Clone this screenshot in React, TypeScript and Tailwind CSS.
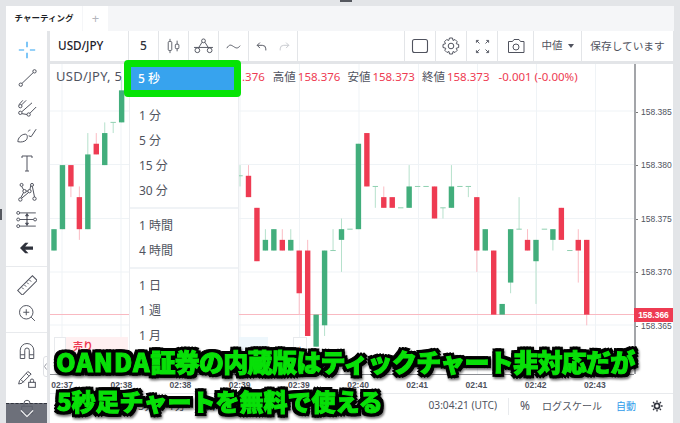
import React from "react";

const JP = '"Noto Sans","Noto Sans CJK JP",sans-serif';
const ARIAL = '"Liberation Sans",sans-serif';

// [index, open, close, high, low] in thousandths above 158.300
type C = [number, number, number, number, number];
const candles: C[] = [
  [0, 72, 74, 74, 72], [1, 74, 80, 80, 74], [2, 80, 78, 80, 77], [3, 77, 74, 78, 73],
  [4, 74, 81, 83, 74], [5, 82, 81, 83, 81], [6, 80, 83, 84, 80], [7, 84, 84, 84, 83],
  [8, 84, 87, 88, 84],
  [22, 79, 79, 80, 78], [23, 79, 77, 80, 77], [24, 76, 71, 76, 71], [25, 72, 73, 74, 72],
  [26, 72, 74, 74, 72], [27, 73, 72, 74, 72], [28, 72, 73, 74, 72], [29, 72, 68, 72, 66],
  [30, 72, 64, 73, 64], [31, 63, 66, 66, 63], [32, 65, 72, 72, 64], [33, 72, 72, 74, 72],
  [34, 73, 74, 75, 70], [35, 74, 74, 74, 74], [36, 74, 82, 82, 74], [37, 83, 78, 83, 78],
  [38, 78, 78, 78, 76], [39, 77, 76, 78, 76], [40, 77, 76, 77, 76], [41, 76, 76, 76, 76],
  [42, 76, 78, 80, 76], [43, 78, 78, 78, 78], [44, 78, 78, 78, 78], [45, 78, 75, 78, 75],
  [46, 76, 76, 76, 75], [47, 76, 78, 80, 76], [48, 78, 78, 78, 78], [49, 78, 78, 78, 77],
  [50, 77, 72, 77, 70], [51, 72, 74, 74, 72], [52, 72, 66, 72, 66], [53, 66, 67, 67, 66],
  [54, 69, 74, 74, 68], [55, 74, 74, 77, 74], [56, 73, 72, 74, 72], [57, 71, 73, 73, 67],
  [58, 74, 74, 74, 74], [59, 73, 74, 74, 72], [60, 76, 73, 76, 73], [61, 72, 72, 72, 72],
  [62, 73, 72, 74, 69], [63, 73, 66, 73, 65],
];
const py = (p: number) => 218.5 - (p - 75) * 10.68;
const cx = (i: number) => 54 + 8.456 * i;

function Chart() {
  const gx = [62, 121, 180, 240, 299.5, 359, 418.5, 477.5, 536.5, 595.5];
  const gy = [111, 164.5, 218.5, 272, 325];
  return (
    <svg viewBox="50 64 584 310" width={584} height={310} className="block">
      {gx.map((x) => <line key={x} x1={x} x2={x} y1={64} y2={374} stroke="#eff3f6" />)}
      {gy.map((y) => <line key={y} x1={50} x2={634} y1={y} y2={y} stroke="#eff3f6" />)}
      <line x1={50} x2={634} y1={314.5} y2={314.5} stroke="#f9b9c1" />
      {candles.map(([i, o, c, h, l]) => {
        const up = c >= o;
        const x = cx(i);
        const top = py(Math.max(o, c));
        const bot = py(Math.min(o, c));
        return (
          <g key={i}>
            <line x1={x} x2={x} y1={py(h)} y2={py(l)} stroke={up ? "#b6e1cc" : "#fbbcc4"} strokeWidth={1} />
            {o === c ? (
              <line x1={x - 2.7} x2={x + 2.7} y1={top} y2={top} stroke="#8fd0b0" strokeWidth={1} />
            ) : (
              <rect x={x - 2.7} y={top} width={5.4} height={bot - top} fill={up ? "#42ae7c" : "#ee3b52"} />
            )}
          </g>
        );
      })}
    </svg>
  );
}

const S = ({ children, w = 24, h = 24, vb, sw = 1 }: { children: React.ReactNode; w?: number; h?: number; vb?: string; sw?: number }) => (
  <svg width={w} height={h} viewBox={vb ?? `0 0 ${w} ${h}`} fill="none" stroke="#50535e" strokeWidth={sw} className="block">
    {children}
  </svg>
);

const L = ({ children }: { children: React.ReactNode }) => (
  <S w={20} h={20} vb="0 0 24 24" sw={1.2}>{children}</S>
);

const leftIcons: React.ReactNode[] = [
  <svg width="18" height="18" viewBox="0 0 22 22" stroke="#2ea3f2" strokeWidth="1.5" fill="none" className="block"><path d="M11 1v6.500M11 14.500v6.500M1 11h6.500M14.500 11H21" /></svg>,
  <L><circle cx="4.500" cy="20" r="2" /><circle cx="21" cy="4" r="2" /><path d="M6 18.500 19.500 5.500" /></L>,
  <L><circle cx="4" cy="19" r="2" /><circle cx="14" cy="21" r="2" /><circle cx="4" cy="11" r="2" /><path d="M5.500 9.500 11 4M6 17.500 18 7M6 20l6 1M15.500 19.500 23 12M2.500 9 7 4" /></L>,
  <L><path d="M1 20c0-4 4-9 9-9 3 0 3 5 1 7-2 2-6 3-10 2Z" /><path d="M14 13l3 1 6-9" /><path d="M13 8c1-1 2-2 3-2" /></L>,
  <S w={12} h={17} vb="0 0 12 17"><path d="M1 3V1h10v2M6 1v15M4 16h4" /></S>,
  <L><circle cx="4" cy="21" r="2" /><circle cx="5.500" cy="3.500" r="1.800" /><circle cx="18" cy="3.500" r="1.800" /><circle cx="21" cy="20" r="2" /><circle cx="9" cy="11" r="2" /><circle cx="15" cy="11" r="2" /><path d="M4.500 19 8 12.500M5.700 5.500 8 9.500M16.500 4.500 15.500 9M18.500 5.500 21 18M11 11h2M5.500 19.500 14 12.500" /></L>,
  <svg width="22" height="19" viewBox="0 0 30 24" fill="none" stroke="#50535e" strokeWidth="1.300" className="block"><circle cx="3" cy="3" r="2" /><circle cx="3" cy="12" r="2" /><circle cx="3" cy="21" r="2" /><circle cx="26" cy="12" r="2" /><path d="M5 3h22M5 21h22M5 12h19" /><path d="M15 4v16" stroke="#30333d" /><path d="M13 7l2-3 2 3ZM13 17l2 3 2-3Z" fill="#30333d" /></svg>,
];

function Tool({ children, className = "" }: { children: React.ReactNode; className?: string }) {
  return <div className={`h-[28px] flex items-center justify-center ${className}`}>{children}</div>;
}

function Seg({ w, children, className = "" }: { w: string; children?: React.ReactNode; className?: string }) {
  return <div className={`${w} h-full bg-white flex items-center justify-center shrink-0 ${className}`}>{children}</div>;
}

export default function App() {
  const items1 = ["1 分", "5 分", "15 分", "30 分"];
  const items2 = ["1 時間", "4 時間"];
  const items3 = ["1 日", "1 週", "1 月"];
  const times = ["02:37", "02:38", "02:38", "02:39", "02:39", "02:40", "02:41", "02:41", "02:42", "02:43"];
  const prices = ["158.385", "158.380", "158.375", "158.370", "158.365"];
  const Item = ({ t }: { t: string }) => (
    <div className="h-[25px] flex items-center pl-[9px] text-[12px] text-[#50535e]">{t}</div>
  );
  return (
    <div className="relative w-[680px] h-[423px] overflow-hidden bg-[#e3e5e8] pt-[6px] pl-[6px] flex flex-col" style={{ fontFamily: JP }}>
      {/* tabs */}
      <div className="h-[25px] mr-[6px] bg-[#f5f6f8] flex shrink-0">
        <div className="w-[76px] bg-white flex items-center justify-center text-[8.500px] font-bold text-[#1d1f26]">チャーティング</div>
        <div className="w-[25px] ml-[1px] bg-white flex items-center justify-center text-[13px] text-[#b4b6bd]">+</div>
      </div>

      <div className="flex flex-1 min-h-0">
        {/* left toolbar */}
        <div className="w-[41px] bg-white flex flex-col items-center shrink-0 relative">
          <div className="flex flex-col pt-[5px] h-[235px]">
            {leftIcons.map((ic, i) => (
              <Tool key={i} className="!h-[28.300px]">{ic}</Tool>
            ))}
            <Tool className="!h-[28.300px]">
              <svg width="13" height="12" viewBox="0 0 20 16" fill="#2f323c" className="block"><path d="M0 8 8 0h5L8 5.500h12v5H8l5 5.500H8Z" /></svg>
            </Tool>
          </div>
          <div className="w-full h-[1px] bg-[#e8eaed]" />
          <div className="flex flex-col pt-[4px] h-[65px]">
            <Tool>
              <S w={20} h={20} vb="0 0 24 24" sw={1.2}><rect x="0" y="8.500" width="25" height="8" transform="rotate(-45 12.500 12.500)" /><path d="M6 15l2 2M9 12l2 2M12 9l2 2M15 6l2 2" /></S>
            </Tool>
            <Tool>
              <S w={18} h={18} vb="0 0 24 24" sw={1.300}><circle cx="11" cy="11" r="9" /><path d="M7 11h8M11 7v8M17.500 17.500l5 5" /></S>
            </Tool>
          </div>
          <div className="w-full h-[1px] bg-[#e8eaed]" />
          <div className="flex flex-col pt-[4px]">
            <Tool>
              <S w={18} h={18} vb="0 0 24 24" sw={1.300}><path d="M3 22V11a9 9 0 0 1 18 0v11h-6V11a3 3 0 0 0-6 0v11ZM3 17h6M15 17h6" /></S>
            </Tool>
            <Tool>
              <S w={20} h={20} vb="0 0 24 24" sw={1.2}><path d="M2 18 3 14 13 3l4 3L6 17ZM5 13l3 3M11 5l3 3" /><rect x="14" y="16" width="8" height="6" /><path d="M16 16v-2a2 2 0 0 1 4 0v2" /></S>
            </Tool>
            <Tool>
              <S w={18} h={18} vb="0 0 24 24" sw={1.300}><rect x="5" y="11" width="14" height="10" /><path d="M8 11V7a4 4 0 0 1 8 0" /></S>
            </Tool>
          </div>
        </div>

        {/* right column */}
        <div className="ml-[3px] flex flex-col w-[623px] min-h-0">
          <div className="h-[30px] flex gap-[1px] shrink-0">
            <Seg w="w-[78px]" className="!justify-start pl-[8px] text-[11.700px] font-medium text-[#1f222b]">USD/JPY</Seg>
            <Seg w="w-[29px]" className="text-[12px] font-medium text-[#30333d]">5</Seg>
            <Seg w="w-[29px]">
              <S w={16} h={16} vb="0 0 18 18"><rect x="2.500" y="4" width="4" height="10" rx="1" /><path d="M4.500 1v3M4.500 14v3M12.500 3v4M12.500 12v3" /><rect x="10.500" y="7" width="4" height="5" rx="1" /></S>
            </Seg>
            <Seg w="w-[29px]">
              <S w={19} h={17} vb="0 0 20 18"><circle cx="3.500" cy="13" r="2.500" /><circle cx="10" cy="3" r="2" /><circle cx="16.500" cy="13" r="2.500" /><path d="M0 10h20M8.500 4.500 5 10M11.500 4.500 15 10" /></S>
            </Seg>
            <Seg w="w-[29px]">
              <S w={15} h={9} vb="0 0 18 10" sw={1.100}><path d="M1 7c3-5 5-4 8-2s5 3 8-1" /></S>
            </Seg>
            <Seg w="w-[48px]" className="gap-[12px]">
              <S w={11} h={11} vb="0 0 14 14" sw={1.200}><path d="M5 2 1.500 5.500 5 9M1.500 5.500H8a4.500 4.500 0 0 1 4.500 4.500v2" /></S>
              <svg width="11" height="11" viewBox="0 0 14 14" fill="none" stroke="#c6c8cd" strokeWidth="1.200" className="block"><path d="M9 2l3.500 3.500L9 9M12.500 5.500H6A4.500 4.500 0 0 0 1.500 10v2" /></svg>
            </Seg>
            <Seg w="flex-1 !shrink" />
            <Seg w="w-[30px]">
              <S w={18} h={18}><rect x="1.500" y="2.500" width="15" height="13" rx="2" strokeWidth="1.100" /></S>
            </Seg>
            <Seg w="w-[30px]">
              <S w={18} h={18}><circle cx="9" cy="9" r="2.800" /><path d="M7.500 1h3l.5 2.500 2-1 2.200 2.200-1 2 2.500.8v3l-2.500.8 1 2-2.200 2.200-2-1-.5 2.500h-3l-.5-2.500-2 1-2.200-2.200 1-2L1 10.500v-3l2.500-.8-1-2 2.200-2.200 2 1Z" /></S>
            </Seg>
            <Seg w="w-[30px]">
              <S w={15} h={15} vb="0 0 16 16"><path d="M1.500 4V1.500H4M1.800 1.800l3 3M14.500 4V1.500H12M14.200 1.800l-3 3M1.500 12v2.500H4M1.800 14.200l3-3M14.500 12v2.500H12M14.200 14.200l-3-3" /></S>
            </Seg>
            <Seg w="w-[35px]">
              <S w={18} h={16}><path d="M1.500 3.500h4l1.500-2h5l1.500 2h3.500v11h-15.500Z" /><circle cx="9" cy="9" r="3" /></S>
            </Seg>
            <Seg w="w-[47px]" className="gap-[5px] text-[10.500px] text-[#50535e]">
              中値
              <svg width="6" height="4" viewBox="0 0 6 4" fill="#50535e" className="block"><path d="M0 0h6L3 4Z" /></svg>
            </Seg>
            <Seg w="w-[91px]" className="text-[10.700px] text-[#50535e]">保存しています</Seg>
          </div>

          {/* chart pane */}
          <div className="mt-[3px] flex-1 bg-white flex flex-col min-h-0 relative">
            <div className="flex h-[310px] shrink-0">
              <div className="relative w-[584px]">
                <Chart />
              </div>
              <div className="w-[39px] border-l-2 border-[#a3a5a9] flex flex-col pt-[40px] text-[8.500px] text-[#50535e]" style={{ fontFamily: ARIAL }}>
                {prices.map((p) => (
                  <div key={p} className="h-[53.500px] flex items-start shrink-0">
                    <div className="h-[16px] flex items-center gap-[2px]">
                      <span className="w-[2px] h-[1px] bg-[#777]" />
                      <span className="ml-[1px]">{p}</span>
                    </div>
                  </div>
                ))}
              </div>
            </div>
            {/* time axis */}
            <div className="h-[19px] border-t border-[#8b8d92] w-[584px] flex text-[8.500px] font-bold text-[#50535e] shrink-0" style={{ fontFamily: ARIAL }}>
              {times.map((t, i) => (
                <div key={i} className={`w-[59.200px] flex justify-center pt-[4px] shrink-0 ${i === 0 ? "-ml-[17.500px]" : ""}`}>{t}</div>
              ))}
            </div>
            {/* bottom toolbar */}
            <div className="h-[25px] border-t border-[#e8eaed] flex items-center text-[10px] text-[#50535e] pr-[10px]">
              <div className="flex gap-[13px] pl-[88px] text-[11px]"><span>3分</span><span>1分</span><span>5日</span><span>1日</span></div>
              <div className="ml-auto flex items-center">
                <span className="text-[10.200px]">03:04:21 (UTC)</span>
                <span className="w-[1px] h-[17px] bg-[#e8eaed] mx-[11px]" />
                <span className="text-[12px]">%</span>
                <span className="ml-[12px]">ログスケール</span>
                <span className="ml-[14px] text-[#2e9bea]">自動</span>
                <span className="ml-[15px]">
                  <svg width="12" height="12" viewBox="0 0 14 14" className="block" fill="none" stroke="#30333d" strokeWidth="2"><circle cx="7" cy="7" r="3" /><path d="M7 .5v2M7 11.500v2M.5 7h2M11.500 7h2M2.400 2.400l1.400 1.400M10.200 10.200l1.400 1.400M11.600 2.400l-1.400 1.400M3.800 10.200l-1.400 1.400" strokeWidth="1.600" /></svg>
                </span>
              </div>
            </div>
          </div>
        </div>
      </div>

      {/* chart legend */}
      <div className="absolute left-[56px] top-[68px] h-[18px] flex items-center text-[13px] tracking-[0.3px] text-[#50535e] whitespace-nowrap">USD/JPY, 5</div>
      <div className="absolute left-[242px] top-[68px] h-[18px] flex items-center text-[11.500px] text-[#50535e] whitespace-nowrap">
        <span className="text-[#ee3b52]">.376</span>
        <span className="ml-[8px]">高値</span><span className="ml-[2px] text-[#ee3b52]">158.376</span>
        <span className="ml-[7px]">安値</span><span className="ml-[2px] text-[#ee3b52]">158.373</span>
        <span className="ml-[7px]">終値</span><span className="ml-[2px] text-[#ee3b52]">158.373</span>
        <span className="ml-[9px] text-[#ee3b52]">-0.001 (-0.00%)</span>
      </div>

      {/* last price tag */}
      <div className="absolute left-[634px] top-[308px] w-[39px] h-[14px] bg-[#ee3b52] text-white text-[8.500px] font-bold flex items-center justify-center" style={{ fontFamily: ARIAL }}>158.366</div>

      {/* buy/sell panel */}
      <div className="absolute left-[54px] top-[337px] h-[34px] w-[253px] flex text-[10px]">
        <div className="w-[12px] bg-white border border-[#e8eaed]" />
        <div className="w-[62px] bg-[#fff0f1] text-[#ee3b52] font-bold pl-[7px] pt-[2px]">売り</div>
        <div className="w-[110px] bg-white" />
        <div className="w-[30px] bg-[#eef7fc]" />
        <div className="w-[25px] bg-white" />
        <div className="w-[14px] bg-white border border-[#e8eaed] text-[#30333d] flex items-start justify-center text-[12px] leading-[14px] pt-[5px]">+</div>
      </div>

      {/* interval menu */}
      <div className="absolute left-[129px] top-[64px] w-[110px] h-[296px] bg-white border-x border-[#eceef1] pt-[39px]">
        {items1.map((t) => <Item key={t} t={t} />)}
        <div className="h-[2px] my-[4px] bg-[#f0f3f6]" />
        {items2.map((t) => <Item key={t} t={t} />)}
        <div className="h-[2px] my-[4px] bg-[#f0f3f6]" />
        {items3.map((t) => <Item key={t} t={t} />)}
      </div>
      <div className="absolute left-[124px] top-[60px] w-[117px] h-[37px] border-[7px] border-[#05e305] rounded-[4px] bg-[#37a3ee] flex items-center pl-[7px] text-[12px] font-medium text-white">5 秒</div>

      {/* collapse handle and scroll button */}
      <div className="absolute left-[43px] top-[356px] w-[5px] h-[21px] bg-white border border-[#dfe1e5] rounded-l-[3px] flex items-center justify-center">
        <svg width="3" height="7" viewBox="0 0 3 7" fill="none" stroke="#9a9da5" className="block"><path d="M2.500 .5 .5 3.500 2.500 6.500" /></svg>
      </div>
      <div className="absolute left-[6px] top-[403px] w-[41px] h-[20px] bg-[#5d606c]/90 border-t border-dashed border-[#30333d] flex items-center justify-center">
        <svg width="14" height="9" viewBox="0 0 16 10" fill="none" stroke="#fff" strokeWidth="1.300" className="block"><path d="M1 1.500 8 8.500 15 1.500" /></svg>
      </div>
      <div className="absolute left-[340px] top-0 w-[12px] h-[2px] bg-[#55585f]" />
      <div className="absolute left-0 top-[209px] w-[2px] h-[11px] bg-[#55585f]" />

      {/* caption overlay */}
      <div className="absolute left-[56px] top-[343.500px] font-black text-[#08e008] whitespace-nowrap text-[25px] leading-[34px] tracking-[-0.7px] [-webkit-text-stroke:1px_#08e008] [filter:drop-shadow(3px_0_0_#000)_drop-shadow(-3px_0_0_#000)_drop-shadow(0_3px_0_#000)_drop-shadow(0_-3px_0_#000)_drop-shadow(1px_2px_1px_#0008)]" style={{ fontFamily: '"Noto Sans CJK JP",sans-serif' }}>
        <span className="tracking-[1px]">OANDA</span>証券の内蔵版はティックチャート非対応だが
      </div>
      <div className="absolute left-[57px] top-[384px] font-black text-[#08e008] whitespace-nowrap text-[24px] leading-[34px] [-webkit-text-stroke:1px_#08e008] [filter:drop-shadow(3px_0_0_#000)_drop-shadow(-3px_0_0_#000)_drop-shadow(0_3px_0_#000)_drop-shadow(0_-3px_0_#000)_drop-shadow(1px_2px_1px_#0008)]" style={{ fontFamily: '"Noto Sans CJK JP",sans-serif' }}>
        5秒足チャートを無料で使える
      </div>
    </div>
  );
}
